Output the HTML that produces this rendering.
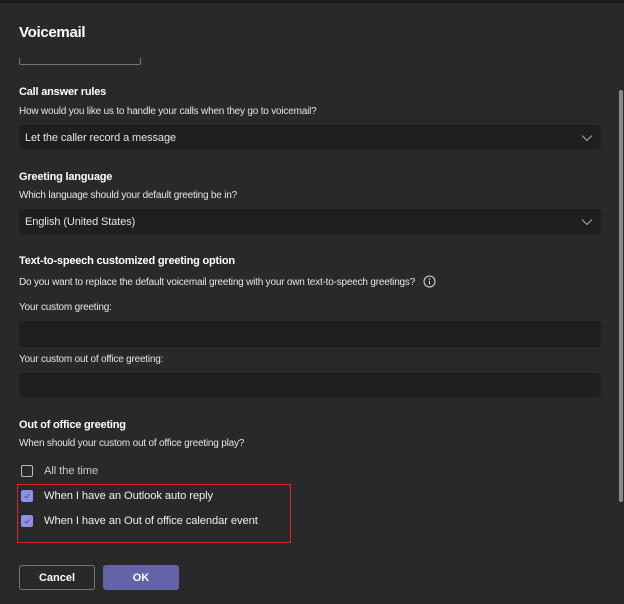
<!DOCTYPE html>
<html><head><style>
body{margin:0;width:624px;height:604px;background:#292929;font-family:"Liberation Sans",Arial,sans-serif;color:#fff;position:relative;overflow:hidden}
.a{position:absolute;white-space:nowrap}
.h{font-weight:bold;font-size:11px;letter-spacing:-0.2px}
.s{font-size:10px;letter-spacing:-0.2px;color:#e6e6e6}
.box{position:absolute;left:19px;width:582px;background:#1f1f1f;border-radius:3px}
.chev{position:absolute;right:8px;top:9px}
.cb{position:absolute;left:21px;width:12px;height:12px;border-radius:2px;box-sizing:border-box}
.cb svg{display:block}
.l{font-size:11.2px;letter-spacing:-0.1px;color:#f0f0f0}
</style></head><body>
<div class="a" style="left:0;top:0;width:624px;height:3px;background:#1c1c1c"></div>
<div class="a" style="left:19px;top:24px;font-size:15px;font-weight:bold;letter-spacing:-0.3px">Voicemail</div>
<div class="a" style="left:19px;top:58px;width:120px;height:6px;border:1px solid #777;border-top:none;border-radius:0 0 2px 2px"></div>
<div class="a" style="left:619px;top:90px;width:4px;height:412px;background:#8a8a8a;border-radius:2px"></div>

<div class="a h" style="left:19px;top:86px">Call answer rules</div>
<div class="a s" style="left:19px;top:106px">How would you like us to handle your calls when they go to voicemail?</div>
<div class="box" style="top:125px;height:25px"><span class="a" style="left:6px;top:7px;font-size:11px;letter-spacing:-0.1px;color:#e6e6e6">Let the caller record a message</span>
<svg class="chev" width="12" height="8" viewBox="0 0 12 8"><path d="M1 1.5l5 5 5-5" fill="none" stroke="#aaa" stroke-width="1"/></svg></div>

<div class="a h" style="left:19px;top:171px">Greeting language</div>
<div class="a s" style="left:19px;top:190px">Which language should your default greeting be in?</div>
<div class="box" style="top:209px;height:25px"><span class="a" style="left:6px;top:7px;font-size:11px;letter-spacing:-0.1px;color:#e6e6e6">English (United States)</span>
<svg class="chev" width="12" height="8" viewBox="0 0 12 8"><path d="M1 1.5l5 5 5-5" fill="none" stroke="#aaa" stroke-width="1"/></svg></div>

<div class="a h" style="left:19px;top:255px">Text-to-speech customized greeting option</div>
<div class="a s" style="left:19px;top:277px">Do you want to replace the default voicemail greeting with your own text-to-speech greetings?</div>
<svg class="a" style="left:423px;top:275px" width="13" height="13" viewBox="0 0 13 13"><circle cx="6.5" cy="6.5" r="5.5" fill="none" stroke="#ddd" stroke-width="1"/><circle cx="6.5" cy="4" r=".8" fill="#ddd"/><path d="M6.5 5.7v3.8" stroke="#ddd" stroke-width="1"/></svg>
<div class="a s" style="left:19px;top:302px">Your custom greeting:</div>
<div class="box" style="top:321px;height:26px"></div>
<div class="a s" style="left:19px;top:354px">Your custom out of office greeting:</div>
<div class="box" style="top:373px;height:25px"></div>

<div class="a h" style="left:19px;top:419px">Out of office greeting</div>
<div class="a s" style="left:19px;top:438px">When should your custom out of office greeting play?</div>
<div class="cb" style="top:465px;border:1px solid #bbb"></div>
<div class="a l" style="left:44px;top:465px;color:#ccc">All the time</div>
<div class="cb" style="top:490px;background:#8f8fe8"><svg width="12" height="12"><path d="M3.5 6.3l1.8 1.6L8.5 4.3" fill="none" stroke="#555" stroke-width="1"/></svg></div>
<div class="a l" style="left:44px;top:490px">When I have an Outlook auto reply</div>
<div class="cb" style="top:515px;background:#8f8fe8"><svg width="12" height="12"><path d="M3.5 6.3l1.8 1.6L8.5 4.3" fill="none" stroke="#555" stroke-width="1"/></svg></div>
<div class="a l" style="left:44px;top:515px">When I have an Out of office calendar event</div>
<div class="a" style="left:17px;top:484px;width:272px;height:57px;border:1px solid #d9222a"></div>

<div class="a" style="left:19px;top:565px;width:74px;height:23px;border:1px solid #777;border-radius:3px;text-align:center;line-height:24px;font-size:11px;font-weight:bold">Cancel</div>
<div class="a" style="left:103px;top:565px;width:76px;height:25px;background:#6264a7;border-radius:3px;text-align:center;line-height:26px;font-size:11px;font-weight:bold">OK</div>
</body></html>
